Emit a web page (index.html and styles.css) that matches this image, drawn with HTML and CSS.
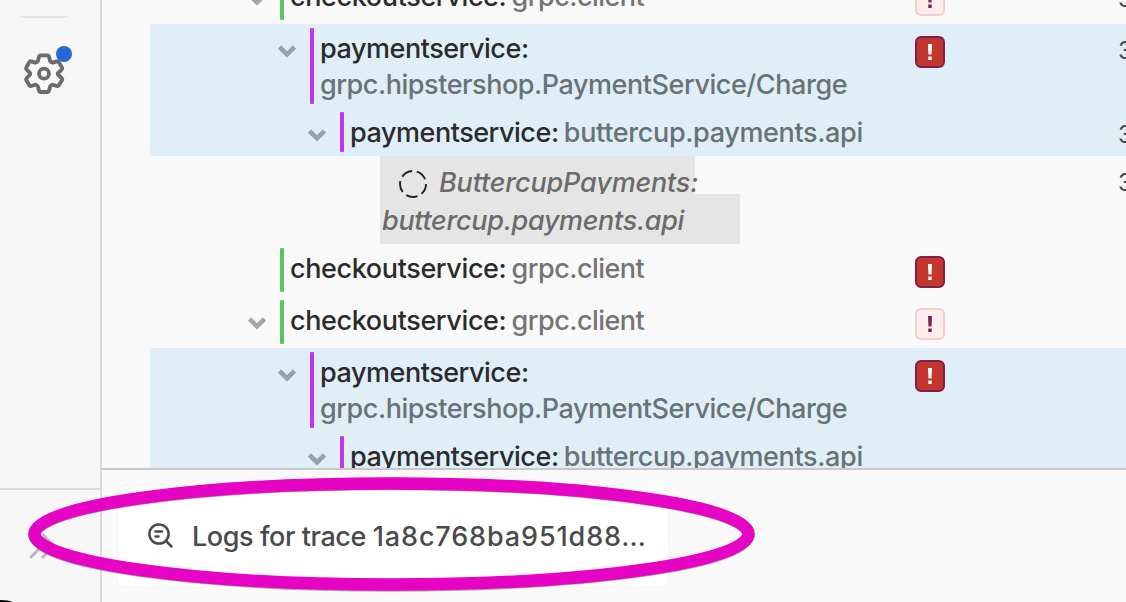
FILE: index.html
```html
<!DOCTYPE html>
<html lang="en">
<head>
<meta charset="utf-8">
<title>Trace view</title>
<link rel="stylesheet" href="styles.css">
</head>
<body>
<svg class="defs" width="0" height="0"><defs>
<symbol id="chev" viewBox="0 0 20 14"><path d="M2.500 3L10 10.300L17.500 3" fill="none" stroke="currentColor" stroke-width="4.600"/></symbol>
<symbol id="bang" viewBox="0 0 6 18"><path d="M1 1H5L4.500 11.500H1.500ZM1.300 13.500H4.700V17H1.300Z" fill="currentColor"/></symbol>
</defs></svg>
<div class="app">
  <nav class="sidebar">
    <div class="sidebar-main">
      <div class="divider"></div>
      <div class="settings">
        <svg class="gear" viewBox="69 156 126 126"><path d="M122 166H142Q146 166 147 170L150 182Q153 187 158 188L170 184Q174 183 176 186L186 202Q188 206 185 209L175 218Q172 221 175 225L185 234Q188 237 186 241L176 256Q174 259 170 258L158 254Q153 255 150 260L147 272Q146 276 142 276H122Q118 276 117 272L114 260Q111 255 106 254L94 258Q90 259 88 256L79 241Q77 237 80 234L89 225Q92 221 89 218L80 209Q77 206 79 202L88 186Q90 183 94 184L106 188Q111 187 114 182L117 170Q118 166 122 166Z"/><circle cx="132" cy="221" r="15"/></svg>
        <span class="dot"></span>
      </div>
    </div>
    <div class="sidebar-foot"><svg class="expand" viewBox="0 0 30 30"><path d="M3 25L14 14L3 3M15 25L26 14L15 3"/></svg></div>
  </nav>
  <main class="main">
    <section class="trace">
      <div class="row service first"><div class="name"><svg class="chev"><use href="#chev"/></svg><i class="bar"></i><div class="label"><b class="co">checkoutservice:</b> <span class="gc">grpc.client</span></div></div><span class="badge light"><svg><use href="#bang"/></svg></span><span class="time">3</span></div>
      <div class="row payment tint"><div class="name"><svg class="chev"><use href="#chev"/></svg><i class="bar"></i><div class="label"><b class="pa">paymentservice:</b><br><span class="hip">grpc.hipstershop.PaymentService/Charge</span></div></div><span class="badge"><svg><use href="#bang"/></svg></span><span class="time">3</span></div>
      <div class="row api tint"><div class="name"><svg class="chev"><use href="#chev"/></svg><i class="bar"></i><div class="label"><b class="pa">paymentservice:</b> <span class="bp">buttercup.payments.api</span></div></div><span></span><span class="time">3</span></div>
      <div class="row inferred"><div class="inferred-name"><div class="inferred-top"><svg class="ring" viewBox="0 0 30 30"><circle cx="15" cy="15" r="13"/></svg><em class="it1">ButtercupPayments:</em></div><div class="inferred-bottom"><em class="it2">buttercup.payments.api</em></div></div><span></span><span class="time">3</span></div>
      <div class="row service"><div class="name"><svg class="chev hidden"></svg><i class="bar"></i><div class="label"><b class="co">checkoutservice:</b> <span class="gc">grpc.client</span></div></div><span class="badge"><svg><use href="#bang"/></svg></span></div>
      <div class="row service"><div class="name"><svg class="chev"><use href="#chev"/></svg><i class="bar"></i><div class="label"><b class="co">checkoutservice:</b> <span class="gc">grpc.client</span></div></div><span class="badge light"><svg><use href="#bang"/></svg></span></div>
      <div class="row payment tint"><div class="name"><svg class="chev"><use href="#chev"/></svg><i class="bar"></i><div class="label"><b class="pa">paymentservice:</b><br><span class="hip">grpc.hipstershop.PaymentService/Charge</span></div></div><span class="badge"><svg><use href="#bang"/></svg></span></div>
      <div class="row api tint"><div class="name"><svg class="chev"><use href="#chev"/></svg><i class="bar"></i><div class="label"><b class="pa">paymentservice:</b> <span class="bp">buttercup.payments.api</span></div></div></div>
    </section>
    <footer class="related">
      <div class="card">
        <svg class="logicon" viewBox="0 0 26 26"><circle cx="11" cy="11" r="9.600"/><path d="M18 18L23.500 23.500M7.500 8.500H14M7.500 13.500H10.500"/></svg>
        <span class="logs">Logs for trace <span class="trace-id">1a8c768ba951d88…</span></span>
      </div>
    </footer>
  </main>
</div>
<svg class="highlight" viewBox="0 0 1126 602"><path d="M0 600Q8 600 13 602H0Z" fill="#000"/><ellipse class="shade" cx="391.500" cy="534.700" rx="357" ry="50.700"/><ellipse class="oval" cx="391.500" cy="534" rx="357" ry="50.500"/></svg>
</body>
</html>
```

FILE: styles.css
```css
* { box-sizing: border-box; }
body { margin: 0; width: 1126px; height: 602px; overflow: hidden; background: #f9f9f9; font: 27px/36px Inter, "Liberation Sans", sans-serif; color: #2b2b2b; }
svg { display: block; flex: none; }
.defs { position: absolute; }
.app { display: flex; height: 602px; }
.sidebar { width: 102px; flex: none; display: flex; flex-direction: column; background: #f7f7f7; border-right: 2px solid #dadada; }
.sidebar-main { height: 488px; padding-top: 16px; }
.divider { width: 48px; height: 2px; margin-left: 20px; background: #e4e4e4; }
.settings { position: relative; width: 42px; height: 42px; margin: 34px 0 0 23px; }
.gear { width: 42px; height: 42px; fill: none; stroke: #6b6b6b; stroke-width: 11.500; }
.dot { position: absolute; left: 33px; top: -6px; width: 16px; height: 16px; border-radius: 50%; background: #2667d4; }
.sidebar-foot { flex: 1; border-top: 2px solid #dadada; padding: 42px 0 0 28px; }
.expand { width: 30px; height: 30px; fill: none; stroke: #b8b8b8; stroke-width: 3; stroke-linecap: round; }
.main { flex: 1; min-width: 0; }
.trace { height: 470px; overflow: hidden; border-bottom: 2px solid #c8c8c8; padding-left: 48px; }
.row { display: grid; grid-template-columns: 765px 203px 1fr; overflow: hidden; }
.first { margin-top: -28px; }
.service { height: 52px; color: #5bc564; --indent: 97px; }
.payment { height: 84px; --indent: 127px; }
.api { height: 48px; --indent: 157px; }
.payment, .api { color: #bf36ee; }
.tint { background: #e0eef7; }
.name { display: flex; padding: 4px 0 4px var(--indent); }
.chev { width: 20px; height: 14px; margin: 16px 13px 0 0; color: #a6a6a6; }
.tint .chev { color: #98a2aa; }
.hidden { visibility: hidden; }
.bar { width: 4px; border-radius: 1px; background: currentColor; }
.label { margin-top: 3px; padding-left: 6px; white-space: nowrap; color: #2b2b2b; word-spacing: -2.400px; }
.label b { font-weight: 500; }
.label span { color: #747474; font-weight: 450; }
.tint .label span { color: #697276; }
.co { letter-spacing: -0.380px; }
.pa { letter-spacing: -0.470px; }
.gc { letter-spacing: -0.530px; }
.hip { letter-spacing: -0.450px; }
.bp { letter-spacing: -0.350px; }
.badge { width: 30px; height: 32px; margin-top: 12px; display: flex; align-items: center; justify-content: center; border: 2px solid #7e1f50; border-radius: 6px; background: #c4352b; color: #fff; }
.badge svg { width: 6px; height: 18px; }
.light { background: #fdecec; border-color: #f6cdcf; color: #7e1f50; }
.time { font-size: 24px; color: #4b4b4b; margin-top: 9px; }
.inferred { height: 88px; }
.inferred-name { padding-left: 230px; color: #6b6b6b; white-space: nowrap; font-weight: 500; }
.inferred-top { position: relative; z-index: 1; display: flex; width: 315px; height: 38px; padding-left: 18px; background: #e5e5e5; }
.ring { width: 30px; height: 30px; margin: 13px 11px 0 0; fill: none; stroke: #222; stroke-width: 1.900; stroke-dasharray: 11.600 4.736; stroke-dashoffset: 0.600; }
.it1 { flex: none; height: 38px; padding: 9px 4px 0 0; overflow: hidden; letter-spacing: -0.160px; }
.inferred-bottom { width: 360px; height: 50px; padding: 9px 0 0 2px; background: #e5e5e5; }
.it2 { letter-spacing: -0.320px; }
.related { padding: 16px 0 0 16px; }
.card { display: flex; align-items: center; width: 550px; height: 100px; padding-left: 30px; gap: 18px; border-radius: 8px; background: #fff; box-shadow: 0 0 3px #0000000a; }
.logicon { width: 26px; height: 26px; fill: none; stroke: #4a4a4a; stroke-width: 2.500; stroke-linecap: round; }
.logs { padding-top: 2px; color: #4a4a4a; white-space: nowrap; font-weight: 450; letter-spacing: -0.420px; }
.trace-id { letter-spacing: 0.880px; }
.highlight { position: absolute; left: 0; top: 0; width: 1126px; height: 602px; fill: none; }
.oval { stroke: #e603c4; stroke-width: 12.500; }
.shade { stroke: #77777799; stroke-width: 12.500; }
```
